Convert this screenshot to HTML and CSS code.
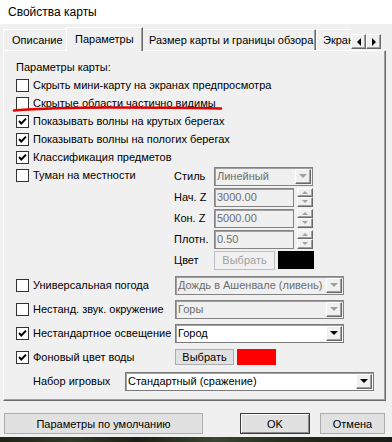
FILE: index.html
```html
<!DOCTYPE html>
<html lang="ru">
<head>
<meta charset="UTF-8" />
<title>Свойства карты</title>
<link rel="stylesheet" href="styles.css">
</head>
<body>

<div class="dialog">
  <div class="titlebar">Свойства карты</div>

  <!-- Tabs -->
  <div class="tabs">
    <div class="tab-strip">
      <div class="tab">Описание</div>
      <div class="tab active">Параметры</div>
      <div class="tab">Размер карты и границы обзора</div>
      <div class="tab">Экран</div>
    </div>
    <div class="tab-scroll">
      <span class="raised arrow-btn"><i class="tri tri-left"></i></span>
      <span class="raised arrow-btn"><i class="tri tri-right"></i></span>
    </div>
  </div>

  <div class="panel">
    <div class="heading">Параметры карты:</div>

    <label class="check-row"><span class="box"></span>Скрыть мини-карту на экранах предпросмотра</label>
    <label class="check-row"><span class="box"></span>Скрытые области частично видимы</label>
    <label class="check-row"><span class="box checked"><svg viewBox="0 0 11 11"><path d="M2 5 L4.3 7.5 L9 2.6"/></svg></span>Показывать волны на крутых берегах</label>
    <label class="check-row"><span class="box checked"><svg viewBox="0 0 11 11"><path d="M2 5 L4.3 7.5 L9 2.6"/></svg></span>Показывать волны на пологих берегах</label>
    <label class="check-row"><span class="box checked"><svg viewBox="0 0 11 11"><path d="M2 5 L4.3 7.5 L9 2.6"/></svg></span>Классификация предметов</label>

    <!-- Fog -->
    <div class="fog">
      <label class="check-row fog-check"><span class="box"></span>Туман на местности</label>
      <div class="fog-grid">
        <span class="lbl">Стиль</span>
        <div class="field select disabled w-select"><span class="val">Линейный</span><span class="raised drop"><i class="tri tri-down"></i></span></div>

        <span class="lbl">Нач. Z</span>
        <div class="spin-row">
          <div class="field disabled w-num"><span class="val">3000.00</span></div>
          <div class="spin"><span class="raised"><i class="tri tri-up small"></i></span><span class="raised"><i class="tri tri-down small"></i></span></div>
        </div>

        <span class="lbl">Кон. Z</span>
        <div class="spin-row">
          <div class="field disabled w-num"><span class="val">5000.00</span></div>
          <div class="spin"><span class="raised"><i class="tri tri-up small"></i></span><span class="raised"><i class="tri tri-down small"></i></span></div>
        </div>

        <span class="lbl">Плотн.</span>
        <div class="spin-row">
          <div class="field disabled w-num"><span class="val">0.50</span></div>
          <div class="spin"><span class="raised"><i class="tri tri-up small"></i></span><span class="raised"><i class="tri tri-down small"></i></span></div>
        </div>

        <span class="lbl">Цвет</span>
        <div class="color-row">
          <button class="btn btn-pick disabled-btn">Выбрать</button>
          <span class="swatch black"></span>
        </div>
      </div>
    </div>

    <!-- Other options -->
    <div class="options">
      <label class="check-row"><span class="box"></span>Универсальная погода</label>
      <div class="field select disabled w-wide"><span class="val">Дождь в Ашенвале (ливень)</span><span class="raised drop"><i class="tri tri-down"></i></span></div>

      <label class="check-row"><span class="box"></span>Нестанд. звук. окружение</label>
      <div class="field select disabled w-wide"><span class="val">Горы</span><span class="raised drop"><i class="tri tri-down"></i></span></div>

      <label class="check-row"><span class="box checked"><svg viewBox="0 0 11 11"><path d="M2 5 L4.3 7.5 L9 2.6"/></svg></span>Нестандартное освещение</label>
      <div class="field select w-wide"><span class="val">Город</span><span class="raised drop"><i class="tri tri-down"></i></span></div>

      <label class="check-row"><span class="box checked"><svg viewBox="0 0 11 11"><path d="M2 5 L4.3 7.5 L9 2.6"/></svg></span>Фоновый цвет воды</label>
      <div class="color-row">
        <button class="btn btn-pick2">Выбрать</button>
        <span class="swatch red"></span>
      </div>
    </div>

    <div class="set-row">
      <span class="set-lbl">Набор игровых</span>
      <div class="field select w-set"><span class="val">Стандартный (сражение)</span><span class="raised drop"><i class="tri tri-down"></i></span></div>
    </div>
  </div>

  <div class="buttons">
    <button class="btn btn-default-params">Параметры по умолчанию</button>
    <button class="btn btn-ok">OK</button>
    <button class="btn btn-cancel">Отмена</button>
  </div>

  <div class="ground"></div>

  <!-- red hand-drawn underline over the page -->
  <svg class="scribble" width="392" height="442" viewBox="0 0 392 442">
    <path d="M14 110.5 Q 50 107.5 110 107.5 T 221 108.5"/>
  </svg>
</div>

</body>
</html>
```

FILE: styles.css
```css
body {
  margin: 0;
  background: #f0f0f0;
  font-family: "Liberation Sans", Arial, sans-serif;
  font-size: 11px;
  color: #000;
}
.dialog {
  width: 392px;
  height: 442px;
  position: relative;
  overflow: hidden;
  display: flex;
  flex-direction: column;
}
.titlebar {
  height: 24px;
  line-height: 24px;
  padding-left: 8px;
  background: #fff;
  font-size: 12px;
}

/* Tabs */
.tabs {
  display: flex;
  align-items: flex-end;
  height: 27px;
  padding-left: 3px;
  padding-right: 5px;
  position: relative;
  z-index: 1;
}
.tab-strip {
  display: flex;
  align-items: flex-end;
  width: 348px;
  height: 27px;
  overflow: hidden;
  flex-shrink: 0;
}
.tab {
  height: 21px;
  line-height: 21px;
  padding: 0 6px;
  margin-bottom: 1px;
  border-top: 1px solid #fff;
  border-left: 1px solid #fff;
  border-right: 1px solid #696969;
  box-shadow: inset -1px 0 #a0a0a0;
  white-space: nowrap;
  box-sizing: border-box;
  flex-shrink: 0;
  background: #f0f0f0;
  font-size: 11px;
}
.tab:first-child {
  width: 65px;
  padding-left: 8px;
}
.tab.active {
  height: 24px;
  line-height: 22px;
  margin: 0 -2px;
  padding: 0 8px;
  width: 77px;
  position: relative;
  z-index: 2;
}
.tab.active + .tab {
  width: 175px;
  padding-left: 7px;
  overflow: hidden;
}
.tab-scroll {
  display: flex;
  height: 15px;
  align-self: flex-end;
  margin-bottom: 2px;
}

/* 3D pieces */
.raised {
  display: flex;
  align-items: center;
  justify-content: center;
  box-sizing: border-box;
  background: #f0f0f0;
  border-top: 1px solid #fff;
  border-left: 1px solid #fff;
  border-right: 1px solid #696969;
  border-bottom: 1px solid #696969;
  box-shadow: inset -1px -1px #a0a0a0;
}
.arrow-btn {
  width: 15px;
  height: 15px;
}
.tri {
  width: 0;
  height: 0;
  border: 4px solid transparent;
  display: block;
}
.tri-left { border-right-color: #000; border-left-width: 0; }
.tri-right { border-left-color: #000; border-right-width: 0; }
.tri-down { border-top-color: #000; border-width: 4px 4px 0 4px; }
.tri-up { border-bottom-color: #000; border-width: 0 3px 3px 3px; }
.tri.small.tri-down { border-width: 3px 3px 0 3px; }
.disabled .tri, .spin .tri { border-top-color: #a0a0a0; }
.spin .tri-up { border-bottom-color: #a0a0a0; border-top-color: transparent; }

/* Panel */
.panel {
  margin: -1px 6px 0 3px;
  height: 351px;
  box-sizing: border-box;
  padding: 8px 0 9px 12px;
  border-top: 1px solid #fff;
  border-left: 1px solid #fff;
  border-right: 1px solid #696969;
  border-bottom: 1px solid #696969;
  box-shadow: inset -1px -1px #a0a0a0;
}
.heading {
  height: 17px;
  line-height: 17px;
}
.check-row {
  display: flex;
  align-items: center;
  gap: 4px;
  height: 18px;
  white-space: nowrap;
}
.box {
  width: 13px;
  height: 13px;
  box-sizing: border-box;
  border: 1px solid #333;
  background: #fff;
  flex-shrink: 0;
  display: flex;
}
.box svg {
  width: 11px;
  height: 11px;
}
.box path {
  fill: none;
  stroke: #000;
  stroke-width: 1.9;
}

/* Fog block */
.fog {
  display: flex;
}
.fog-check {
  width: 158px;
}
.fog-grid {
  display: grid;
  grid-template-columns: 40px auto;
  grid-auto-rows: 20px;
  row-gap: 1px;
  align-items: center;
}
.field {
  height: 19px;
  box-sizing: border-box;
  border: 1px solid #7a7a7a;
  box-shadow: inset 1px 1px #a0a0a0;
  background: #fff;
  display: flex;
  align-items: center;
  padding: 0 1px 0 2px;
}
.field.disabled {
  background: #f0f0f0;
  color: #6d6d6d;
  border-color: #838383;
}
.val {
  flex: 1;
  white-space: nowrap;
  overflow: hidden;
}
.select .drop {
  width: 16px;
  height: 15px;
}
.w-select { width: 99px; }
.w-num { width: 80px; }
.w-wide { width: 169px; }
.w-set { width: 249px; }
.spin-row {
  display: flex;
  gap: 3px;
}
.spin {
  display: flex;
  flex-direction: column;
  height: 19px;
}
.spin .raised {
  width: 16px;
  height: 9.5px;
}
.color-row {
  display: flex;
  gap: 3px;
  align-items: center;
}
.swatch {
  height: 18px;
  display: block;
}
.swatch.black {
  width: 36px;
  background: #000;
}
.swatch.red {
  width: 39px;
  height: 16px;
  background: #ff0000;
}

/* Buttons */
.btn {
  font-family: inherit;
  font-size: 11px;
  height: 21px;
  box-sizing: border-box;
  background: #e1e1e1;
  border: 1px solid #adadad;
  padding: 0;
  color: #000;
}
.btn-pick {
  width: 61px;
  height: 19px;
}
.disabled-btn {
  color: #a0a0a0;
  background: #f0f0f0;
  border-color: #bfbfbf;
}
.btn-pick2 {
  width: 59px;
  height: 16px;
  line-height: 14px;
}

/* lower options */
.options {
  display: grid;
  grid-template-columns: 159px auto;
  grid-auto-rows: 20px;
  row-gap: 4px;
  align-items: center;
  margin-top: 5px;
}
.set-row {
  display: flex;
  align-items: center;
  margin-top: 4px;
  height: 20px;
  padding-left: 17px;
}
.set-lbl {
  width: 92px;
}

.buttons {
  display: flex;
  margin-top: 12px;
  padding-left: 4px;
}
.btn-default-params {
  width: 199px;
}
.btn-ok {
  width: 70px;
  margin-left: 37px;
  border: 1px solid #3c3c3c;
  box-shadow: inset 1px 1px #fff, inset -1px -1px #8a8a8a;
}
.btn-cancel {
  width: 65px;
  margin-left: 10px;
}
.ground {
  margin-top: 3px;
  flex: 1;
  background: linear-gradient(90deg, #1d2418 0%, #2f3a26 18%, #1a2016 35%, #3a4630 55%, #222b1c 75%, #161c13 100%);
}

/* red annotation drawn over the dialog */
.scribble {
  position: absolute;
  left: 0;
  top: 0;
  pointer-events: none;
  z-index: 5;
}
.scribble path {
  fill: none;
  stroke: #e60000;
  stroke-width: 2.6;
  stroke-linecap: round;
}
```
